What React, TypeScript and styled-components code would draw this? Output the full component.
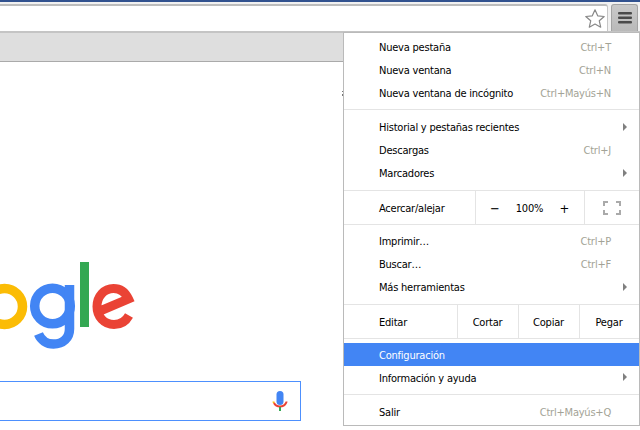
import React from "react";
import styled, { createGlobalStyle } from "styled-components";

const Global = createGlobalStyle`
  html, body { margin: 0; padding: 0; background: #fff; }
  body { width: 640px; height: 430px; overflow: hidden; font-family: "DejaVu Sans Condensed", "Liberation Sans", Arial, sans-serif; }
`;

const Window = styled.div`
  position: relative;
  width: 640px;
  height: 430px;
  overflow: hidden;
  background: #fff;
  display: flex;
  flex-direction: column;
`;

const TitleEdge = styled.div`
  height: 2px;
  background: #32528f;
`;

const Toolbar = styled.div`
  height: 27px;
  padding: 2px 2px 0 0;
  display: flex;
  gap: 3px;
  background: #f1f1f1;
  border-bottom: 2px solid #c4c4c4;
`;

const Omnibox = styled.div`
  flex: 1;
  display: flex;
  justify-content: flex-end;
  align-items: center;
  padding-right: 1px;
  background: #fff;
  border-top: 2px solid #bdbdbd;
  border-right: 1px solid #c6c6c6;
  border-radius: 0 3px 0 0;
`;

const MenuButton = styled.div`
  width: 25px;
  display: flex;
  align-items: center;
  justify-content: center;
  background: linear-gradient(#c9c9c9, #b9b9b9);
  border: 1px solid #a3a3a3;
  border-bottom: none;
  border-radius: 3px 3px 0 0;
`;

const Bookmarks = styled.div`
  height: 28px;
  background: #dedede;
  border-bottom: 1px solid #aaa;
`;

const Page = styled.div`
  flex: 1;
  display: flex;
  flex-direction: column;
  background: #fff;
`;

const Logo = styled.svg`
  display: block;
  margin-top: 197px;
  width: 150px;
  height: 100px;
`;

const SearchBox = styled.div`
  box-sizing: border-box;
  width: 301px;
  height: 40px;
  margin-top: 22px;
  padding-right: 12px;
  display: flex;
  align-items: center;
  justify-content: flex-end;
  border: 1px solid #4d90fe;
  border-left: none;
`;

const ClippedGlyph = styled.span`
  position: absolute;
  left: 342px;
  top: 91px;
  width: 1px;
  height: 1px;
  background: #777;
  box-shadow: 0 3px 0 #777, 0 4px 0 #777;
`;

const Menu = styled.div`
  position: absolute;
  left: 343px;
  top: 32px;
  box-sizing: border-box;
  width: 297px;
  height: 394px;
  background: #fff;
  border: 1px solid #bababa;
  font-size: 11px;
  letter-spacing: -0.22px;
  color: #000;
`;

const Group = styled.div<{ $top: number; $bottom: number; $last?: boolean }>`
  padding: ${(p) => p.$top}px 0 ${(p) => p.$bottom}px;
  border-bottom: ${(p) => (p.$last ? "none" : "1px solid #e4e4e4")};
`;

const Row = styled.div<{ $active?: boolean; $low?: boolean }>`
  height: 23px;
  box-sizing: border-box;
  display: flex;
  align-items: center;
  padding: ${(p) => (p.$low ? "2px" : "0")} 28px 0 35px;
  position: relative;
  background: ${(p) => (p.$active ? "#4285f4" : "transparent")};
  color: ${(p) => (p.$active ? "#fff" : "#000")};
`;

const Label = styled.span`
  flex: 1;
`;

const Shortcut = styled.span`
  color: #a3a396;
`;

const Arrow = styled.span`
  position: absolute;
  right: 12px;
  top: 7px;
  width: 0;
  height: 0;
  border-left: 4px solid #808080;
  border-top: 4px solid transparent;
  border-bottom: 4px solid transparent;
`;

const CellRow = styled.div`
  height: 34px;
  box-sizing: border-box;
  display: flex;
  align-items: stretch;
  border-bottom: 1px solid #e4e4e4;
`;

const CellLabel = styled.div<{ $width: number }>`
  width: ${(p) => p.$width}px;
  box-sizing: border-box;
  padding: 2px 0 0 35px;
  display: flex;
  align-items: center;
`;

const Cell = styled.div<{ $width: number }>`
  width: ${(p) => p.$width}px;
  box-sizing: border-box;
  padding: 2px 1px 0 0;
  display: flex;
  align-items: center;
  justify-content: center;
  border-left: 1px solid #e4e4e4;
`;

const ZoomControls = styled(Cell)`
  justify-content: space-between;
  padding: 2px 15px 0 14px;
`;

const ZoomSign = styled.span`
  font-size: 13px;
`;

const FullscreenIcon = styled.svg`
  margin-top: -2px;
`;

const App: React.FC = () => (
  <Window>
    <Global />
    <TitleEdge />
    <Toolbar>
      <Omnibox>
        <svg width="22" height="22" viewBox="0 0 22 22">
          <path
            d="M11 1.800l2.700 6 6.500.7-4.900 4.300 1.400 6.400L11 16l-5.700 3.200 1.400-6.400L1.800 8.500l6.500-.7z"
            fill="#fff"
            stroke="#888"
            strokeWidth="1.200"
            strokeLinejoin="round"
          />
        </svg>
      </Omnibox>
      <MenuButton>
        <svg width="14" height="12" viewBox="0 0 14 12">
          <g fill="#4a4a4a">
            <rect x="0" y="0" width="14" height="2.500" rx="1" />
            <rect x="0" y="4.500" width="14" height="2.500" rx="1" />
            <rect x="0" y="9" width="14" height="2.500" rx="1" />
          </g>
        </svg>
      </MenuButton>
    </Toolbar>
    <Bookmarks />
    <Page>
      <Logo viewBox="0 259 150 100">
        <circle cx="4.500" cy="306.500" r="18" fill="none" stroke="#fbbc05" strokeWidth="9.500" />
        <circle cx="52.500" cy="306" r="17.800" fill="none" stroke="#4285f4" strokeWidth="9.500" />
        <path d="M69.500 285v44c0 9-6.500 15-16 15-7 0-12.500-4-15-10" fill="none" stroke="#4285f4" strokeWidth="9.500" />
        <rect x="80" y="262" width="9" height="65" fill="#34a853" />
        <path
          d="M129 315.500c-3 5.500-8 9-15 9-10 0-17-8-17-18s7-18 16.500-18c7 0 12 4 15 10.500L100 311"
          fill="none"
          stroke="#ea4335"
          strokeWidth="9"
        />
      </Logo>
      <SearchBox>
        <svg width="16" height="21" viewBox="0 0 16 21">
          <rect x="4.500" y="0" width="7" height="14" rx="3.500" fill="#4285f4" />
          <path d="M1.500 10.500c0 .5.2 1 .5 1.500" fill="none" stroke="#fbbc05" strokeWidth="2" />
          <path d="M2 12c1 2 3.300 3.500 6 3.500s5-1.500 6-3.500c.3-.5.500-1 .500-1.500" fill="none" stroke="#ea4335" strokeWidth="2" />
          <rect x="7" y="16" width="2" height="4" fill="#34a853" />
        </svg>
      </SearchBox>
    </Page>
    <ClippedGlyph />
    <Menu>
      <Group $top={3} $bottom={4}>
        <Row><Label>Nueva pestaña</Label><Shortcut>Ctrl+T</Shortcut></Row>
        <Row><Label>Nueva ventana</Label><Shortcut>Ctrl+N</Shortcut></Row>
        <Row><Label>Nueva ventana de incógnito</Label><Shortcut>Ctrl+Mayús+N</Shortcut></Row>
      </Group>
      <Group $top={6} $bottom={5}>
        <Row><Label>Historial y pestañas recientes</Label><Arrow /></Row>
        <Row><Label>Descargas</Label><Shortcut>Ctrl+J</Shortcut></Row>
        <Row><Label>Marcadores</Label><Arrow /></Row>
      </Group>
      <CellRow>
        <CellLabel $width={131}>Acercar/alejar</CellLabel>
        <ZoomControls $width={109}>
          <ZoomSign>−</ZoomSign>
          <span>100%</span>
          <ZoomSign>+</ZoomSign>
        </ZoomControls>
        <Cell $width={55}>
          <FullscreenIcon width="18" height="14" viewBox="0 0 18 14">
            <path d="M1 5V1h4M13 1h4v4M17 9v4h-4M5 13H1V9" fill="none" stroke="#aaa" strokeWidth="2" />
          </FullscreenIcon>
        </Cell>
      </CellRow>
      <Group $top={5} $bottom={5}>
        <Row><Label>Imprimir…</Label><Shortcut>Ctrl+P</Shortcut></Row>
        <Row><Label>Buscar…</Label><Shortcut>Ctrl+F</Shortcut></Row>
        <Row><Label>Más herramientas</Label><Arrow /></Row>
      </Group>
      <CellRow>
        <CellLabel $width={113}>Editar</CellLabel>
        <Cell $width={61}>Cortar</Cell>
        <Cell $width={61}>Copiar</Cell>
        <Cell $width={60}>Pegar</Cell>
      </CellRow>
      <Group $top={4} $bottom={5}>
        <Row $active $low>Configuración</Row>
        <Row $low><Label>Información y ayuda</Label><Arrow /></Row>
      </Group>
      <Group $top={6} $bottom={0} $last>
        <Row><Label>Salir</Label><Shortcut>Ctrl+Mayús+Q</Shortcut></Row>
      </Group>
    </Menu>
  </Window>
);

export default App;
